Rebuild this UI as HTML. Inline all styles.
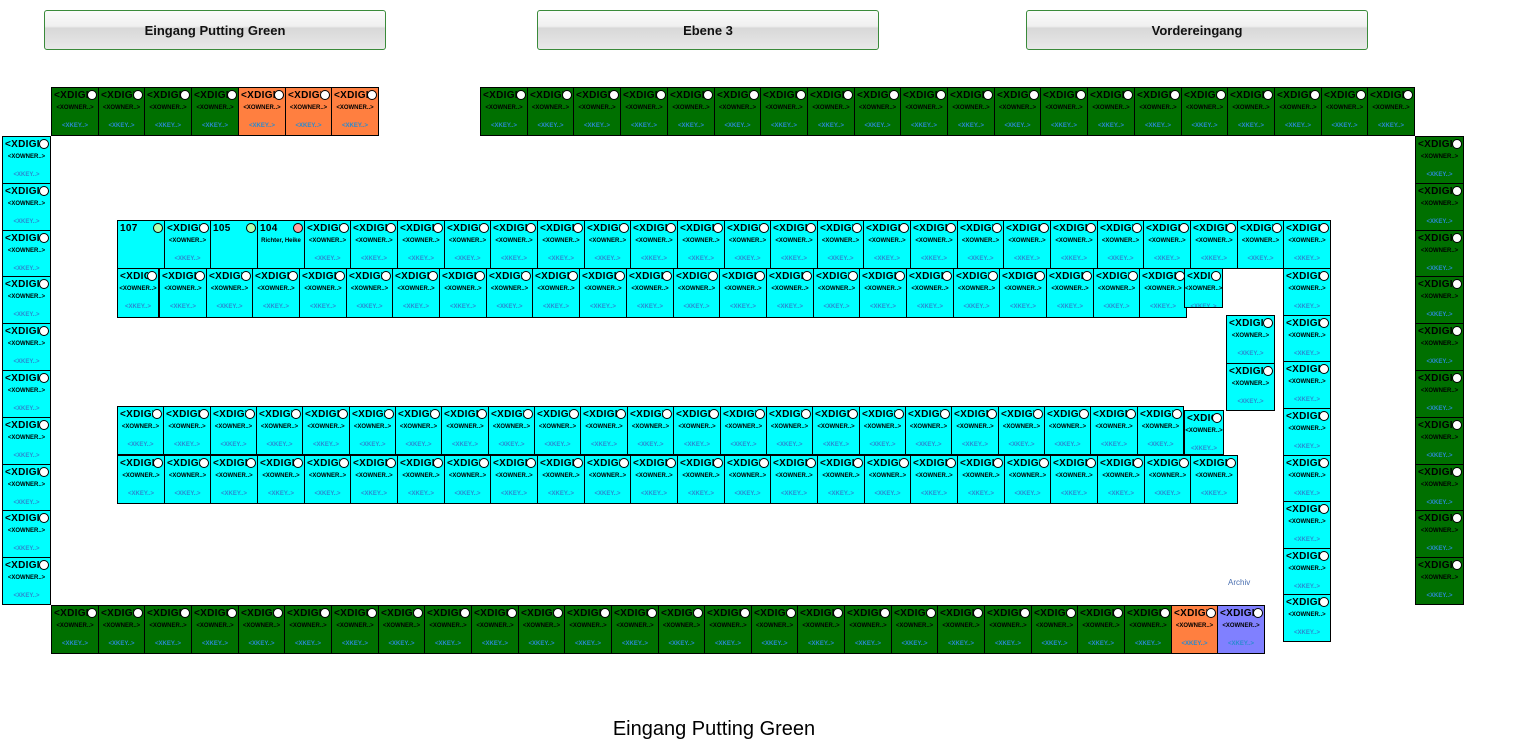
<!DOCTYPE html>
<html><head><meta charset="utf-8">
<style>
body{margin:0;width:1536px;height:755px;background:#fff;position:relative;overflow:hidden;font-family:"Liberation Sans",sans-serif}
.btn{position:absolute;top:10px;height:38px;width:340px;border:1px solid #3a8a3a;border-radius:3px;background:linear-gradient(#fafafa 0%,#f0f0f0 40%,#d8d8d8 45%,#e8e8e8 100%);text-align:center;line-height:40px;font-weight:bold;font-size:13px;color:#111}
.c{position:absolute;box-sizing:border-box;border:1px solid #000;overflow:hidden;margin-left:-1px;margin-top:-1px}
.c .t{position:absolute;left:2px;top:2px;font-weight:bold;font-size:10px;letter-spacing:0.3px;color:#000;white-space:nowrap;width:calc(100% - 12px);overflow:hidden}
.c .o{position:absolute;right:1px;top:2px;width:8px;height:8px;border-radius:50%;background:#fff;border:1px solid #000}
.c .w{position:absolute;left:0;right:0;top:17px;text-align:center;font-weight:bold;font-size:6px;color:#000;white-space:nowrap}
.c .k{position:absolute;left:0;right:0;top:35px;text-align:center;font-size:6px;font-weight:bold;color:#2a8ad0;white-space:nowrap}
</style></head><body>
<div class="btn" style="left:44px">Eingang Putting Green</div>
<div class="btn" style="left:537px">Ebene 3</div>
<div class="btn" style="left:1026px">Vordereingang</div>
<div style="position:absolute;left:1228px;top:578px;font-size:8px;color:#4a6fb0">Archiv</div>
<div style="position:absolute;left:0;width:1428px;top:718px;text-align:center;font-size:20px;color:#000">Eingang Putting Green</div>
<div id="g"></div>
<script>
var G='#007000',O='#ff7f40',C='#00ffff',B='#8080ff',h='';
function cell(x,y,w,ht,bg,title,circ,own,key){
 title=title||'&lt;XDIGI';
 h+='<div class="c" style="left:'+(x+1)+'px;top:'+(y+1)+'px;width:'+(w+1)+'px;height:'+(ht+1)+'px;background:'+bg+'">'+
 '<div class="t">'+title+'</div><div class="o"'+(circ?' style="background:'+circ+'"':'')+'></div>'+
 (own===null?'':'<div class="w">'+(own||'&lt;XOWNER..&gt;')+'</div>')+
 (key===null?'':'<div class="k">&lt;XKEY..&gt;</div>')+'</div>';
}
function row(x0,x1,y,n,ht,colf){var w=(x1-x0)/n;for(var i=0;i<n;i++)cell(Math.round(x0+i*w),y,Math.round(x0+(i+1)*w)-Math.round(x0+i*w),ht,colf(i));}
function col(x,w,y0,y1,n,bg){var s=(y1-y0)/n;for(var i=0;i<n;i++)cell(x,Math.round(y0+i*s),w,Math.round(y0+(i+1)*s)-Math.round(y0+i*s),bg);}
row(51,378,87,7,48,function(i){return i<4?G:O});
row(480,1414,87,20,48,function(){return G});
col(2,48,136,604,10,C);
col(1415,48,136,604,10,G);
row(51,1264,605,26,48,function(i){return i<24?G:(i==24?O:B)});
var w1=(1330-117)/26;
for(var i=0;i<26;i++){var x=Math.round(117+i*w1),w=Math.round(117+(i+1)*w1)-x;
 if(i==0)cell(x,220,w,48,C,'107','#b0ffb0',null,null);
 else if(i==2)cell(x,220,w,48,C,'105','#b0ffb0',null,null);
 else if(i==3)cell(x,220,w,48,C,'104','#ffa0a0','Richter, Heike',null);
 else cell(x,220,w,48,C);}
cell(117,268,41,49,C,'&lt;XDIG');
row(159,1186,268,22,49,function(){return C});
cell(1184,268,38,39,C,'&lt;XDIG');
col(1283,47,268,641,8,C);
col(1226,48,315,410,2,C);
row(117,1183,406,23,48,function(){return C});
cell(1184,410,39,44,C,'&lt;XDIG');
row(117,1237,455,24,48,function(){return C});
document.getElementById('g').innerHTML=h;
</script>
</body></html>
